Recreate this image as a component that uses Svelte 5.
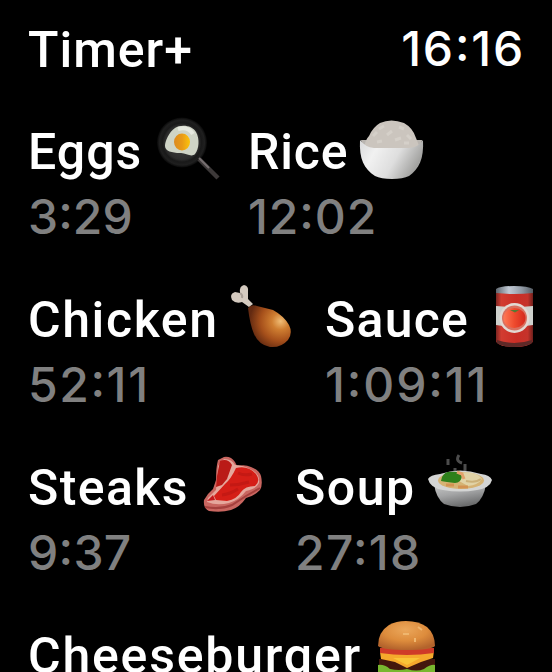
<script>
  const rows = [
    [
      { name: 'Eggs', time: '3:29', icon: 'egg', width: 220, label: 128, ls: 1.0, ts: 0.1 },
      { name: 'Rice', time: '12:02', icon: 'rice', width: 200, label: 112, ls: 0.8, ts: 0.9 }
    ],
    [
      { name: 'Chicken', time: '52:11', icon: 'chicken', width: 297, label: 202, ls: 1.6, ts: 1.6 },
      { name: 'Sauce', time: '1:09:11', icon: 'can', width: 222, label: 159, ls: 1.2, ts: 1.9 }
    ],
    [
      { name: 'Steaks', time: '9:37', icon: 'steak', width: 267, label: 174, ls: 1.4, ts: 0.3 },
      { name: 'Soup', time: '27:18', icon: 'soup', width: 200, label: 133, ls: 1.5, ts: 1.3 }
    ],
    [{ name: 'Cheeseburger', time: '', icon: 'burger', width: 420, label: 348, ls: 1.8, ts: 0 }]
  ];
</script>

<main>
  <header><span class="title">Timer+</span><span class="clock">16:16</span></header>
  {#each rows as row}
    <section>
      {#each row as t}
        <article style:width="{t.width}px">
          <div class="name">
            <span class="label" style:width="{t.label}px" style:letter-spacing="{t.ls}px">{t.name}</span>
            <svg viewBox="0 0 64 64" aria-hidden="true">
              {#if t.icon === 'egg'}
                <defs>
                  <radialGradient id="pan"><stop offset="0" stop-color="#444" /><stop offset=".68" stop-color="#2c2c2c" /><stop offset=".78" stop-color="#191919" /><stop offset=".9" stop-color="#1f1f1f" /><stop offset="1" stop-color="#080808" /></radialGradient>
                  <linearGradient id="yolk"><stop offset="0" stop-color="#dc8a20" /><stop offset=".5" stop-color="#e99a16" /><stop offset="1" stop-color="#fcc40c" /></linearGradient>
                </defs>
                <circle cx="26" cy="24.500" r="25" fill="url(#pan)" />
                <path d="M43 41 62 60" stroke="#3d3939" stroke-width="4.500" />
                <path d="M43 40 53 50" stroke="#777071" stroke-width="2" />
                <path d="M19 10C25 6 36 7 40 14C44 21 43 31 39 36C35 40 29 34 24 35C16 35 9 33 9 28C9 23 13 14 19 10Z" fill="#cfd4c6" />
                <path d="M22 11Q32 8 37 16" fill="none" stroke="#e6e9df" stroke-width="4" />
                <ellipse cx="26" cy="24" rx="8" ry="8.500" fill="url(#yolk)" />
              {:else if t.icon === 'rice'}
                <defs><linearGradient id="bowl" x1="0" x2="1" y1="0" y2=".35"><stop offset="0" stop-color="#d9dadb" /><stop offset=".3" stop-color="#f1f1f1" /><stop offset=".65" stop-color="#dedede" /><stop offset="1" stop-color="#a3a3a1" /></linearGradient></defs>
                <path d="M1 22H62L61 31H3Z" fill="#b9b5b0" />
                <path d="M4 30Q5 22 9 18Q13 9 20 5Q31 0 44 5Q53 10 56 20L60 30Z" fill="#cbc5be" />
                <path d="M13 18L17 14M19 11L24 8M27 17L32 13M39 9L44 11M35 22L41 20M47 17L51 21M17 24L22 23M44 25H49" stroke="#d5d0c9" stroke-width="3" />
                <path d="M0 22Q5 29 14 30H49Q59 29 63 22C64 41 59 51 49 58Q43 61 32 61Q21 61 15 58C4 51 -1 41 0 22Z" fill="url(#bowl)" />
              {:else if t.icon === 'chicken'}
                <defs><radialGradient id="meat" cx=".76" cy=".38" r=".72"><stop offset="0" stop-color="#f0bd76" /><stop offset=".28" stop-color="#cf7e31" /><stop offset=".65" stop-color="#a6501b" /><stop offset="1" stop-color="#632a11" /></radialGradient></defs>
                <path d="M19 21L12 16Q6 18 2 14Q-1 8 5 6L10 7Q9 0 14 -1Q19 0 18 6V13L23 18Z" fill="#d4cabf" />
                <path d="M10 7Q13 9 12 12" fill="none" stroke="#a99f96" stroke-width="2" />
                <path d="M18 22Q21 18 27 20L43 24Q54 30 59 39Q63 47 58 54Q51 62 40 61Q29 59 24 48Q20 39 18 22Z" fill="url(#meat)" />
              {:else if t.icon === 'can'}
                <defs>
                  <linearGradient id="can"><stop offset="0" stop-color="#7d2622" /><stop offset=".14" stop-color="#d23c31" /><stop offset=".55" stop-color="#ca2e26" /><stop offset=".86" stop-color="#c5332b" /><stop offset="1" stop-color="#6e201c" /></linearGradient>
                  <linearGradient id="lid"><stop offset="0" stop-color="#5f6870" /><stop offset=".35" stop-color="#c1c9d4" /><stop offset=".7" stop-color="#9099a4" /><stop offset="1" stop-color="#555c63" /></linearGradient>
                  <linearGradient id="tomato"><stop offset="0" stop-color="#ff7955" /><stop offset=".5" stop-color="#ee4a2d" /><stop offset="1" stop-color="#d5281d" /></linearGradient>
                </defs>
                <path d="M12 4H49V56Q45 61 30.500 61T12 56Z" fill="url(#can)" />
                <path d="M12 7V3Q16 0 30 0T49 3V7Q30 9 12 7Z" fill="url(#lid)" />
                <path d="M13 54Q30 60 48 54V57Q42 61 30 61T13 57Z" fill="#5e2927" />
                <path d="M12 20Q30 22 49 20V39Q30 42 12 39Z" fill="#ced1cd" />
                <circle cx="30.500" cy="32" r="15" fill="#e2d9d3" />
                <circle cx="30.500" cy="32" r="12.500" fill="#d9705f" />
                <ellipse cx="30.500" cy="32" rx="11" ry="10" fill="url(#tomato)" />
                <path d="M26 24H35L31 26.500Z" fill="#557a34" />
              {:else if t.icon === 'steak'}
                <path d="M22 3Q29 2 33 8L35 12Q43 10 49 13Q57 16 59 22Q61 31 58 36Q52 42 44 44Q38 53 29 56Q19 59 7 57Q1 54 2 46Q5 40 11 35L14 26Q14 13 16 6Z" fill="#c96660" />
                <path d="M22 5Q30 5 33 11Q40 11 48 15Q58 19 57 29Q54 35 44 37Q37 46 27 49Q15 52 5 48L6 44L14 36L16 12Z" fill="#e5a79c" />
                <path d="M18 7Q26 4 30 11L25 25L20 31L14 33L15 22Z" fill="#ba1b17" />
                <path d="M34 14Q46 11 54 20Q59 27 53 32Q43 32 39 38Q35 45 25 47L14 46L12 42L23 30Q29 25 34 14Z" fill="#d51e17" />
                <path d="M36 19Q42 22 50 20M28 31Q37 31 47 28M20 41Q28 40 36 35" fill="none" stroke="#c41914" stroke-width="3" />
                <path d="M5 47L11 41L13 46Z" fill="#c3181c" />
                <path d="M3 53Q18 56 30 51L44 42L58 34" fill="none" stroke="#a5403d" stroke-width="2" />
              {:else if t.icon === 'soup'}
                <defs><linearGradient id="soup" x1="0" y1="0" x2=".4" y2="1"><stop offset="0" stop-color="#c7c8c8" /><stop offset=".5" stop-color="#a4a5a6" /><stop offset="1" stop-color="#6c6d6e" /></linearGradient></defs>
                <path d="M20 5V11M31 1Q27 7 34 9M27 14V18M37 10V17" fill="none" stroke="#4c4c4c" stroke-width="3" />
                <path d="M6 30H58Q56 44 48 50Q32 56 16 50Q8 44 6 30Z" fill="url(#soup)" />
                <path d="M0 25Q2 21 12 20Q32 13 53 20Q62 21 64 26Q62 34 49 36Q32 39 15 36Q2 34 0 25Z" fill="#d4d5d4" />
                <ellipse cx="33" cy="26.500" rx="23" ry="8.500" fill="#d5b374" />
                <path d="M31 19Q48 16 54 25Q50 31 40 32L31 27Z" fill="#e1d3a6" />
                <path d="M38 27Q48 29 53 25" fill="none" stroke="#cbb078" stroke-width="2" />
                <path d="M14 23Q17 17 24 18Q32 17 34 22Q33 29 27 29Q18 28 13 27Z" fill="#2e801b" />
                <path d="M29 18L34 20L36 25" fill="none" stroke="#e3a06a" stroke-width="3" />
                <path d="M18 31H26M30 33H40" stroke="#d39352" stroke-width="3" />
              {:else}
                <defs><radialGradient id="bun" cx=".48" cy=".3" r=".7"><stop offset="0" stop-color="#eba75b" /><stop offset=".55" stop-color="#dd8c3c" /><stop offset="1" stop-color="#b3632c" /></radialGradient></defs>
                <path d="M3 37H59V49H3Z" fill="#43170d" />
                <path d="M2 43Q8 42 14 47Q23 49 31 47Q41 50 48 47Q55 42 59 43V56H2Z" fill="#78b72f" />
                <path d="M4 30Q30 34 58 29L57 36L45 40L31 46L19 40L5 37Z" fill="#f5a92c" />
                <path d="M17 36H44L31 43Z" fill="#fac438" />
                <path d="M4 26H58V31Q31 35 4 31Z" fill="#cf3b28" />
                <path d="M2 24Q2 10 13 3Q20 -1 30 -1Q43 -1 51 5Q59 12 59 24Q55 28 31 28T2 24Z" fill="url(#bun)" />
                <path d="M27 12H33M39 16V20M42 5L46 8" stroke="#efb66e" stroke-width="2" />
              {/if}
            </svg>
          </div>
          <div class="time" style:letter-spacing="{t.ts}px">{t.time}</div>
        </article>
      {/each}
    </section>
  {/each}
</main>

<style>
  :global(body) { background: #000; }
  main {
    width: 552px;
    height: 672px;
    overflow: hidden;
    background: #000;
    color: #fff;
    font: 500 50px/60px Roboto, "Noto Sans", sans-serif;
    white-space: nowrap;
  }
  header {
    display: flex;
    justify-content: space-between;
    height: 97px;
    padding: 20px 27px 0 28px;
  }
  .title { letter-spacing: 1px; }
  .clock { font: 500 48px/58px Inter, sans-serif; letter-spacing: 1.8px; font-feature-settings: "case" 1; }
  section { display: flex; height: 168px; padding-left: 28px; }
  article { flex: none; }
  .name { display: flex; align-items: flex-start; height: 71px; }
  .label { flex: none; padding-top: 5px; }
  svg { flex: none; width: 64px; height: 64px; overflow: visible; margin-top: 1px; }
  .time { color: #808080; font: 500 48px/58px Inter, sans-serif; font-feature-settings: "case" 1; }
</style>
